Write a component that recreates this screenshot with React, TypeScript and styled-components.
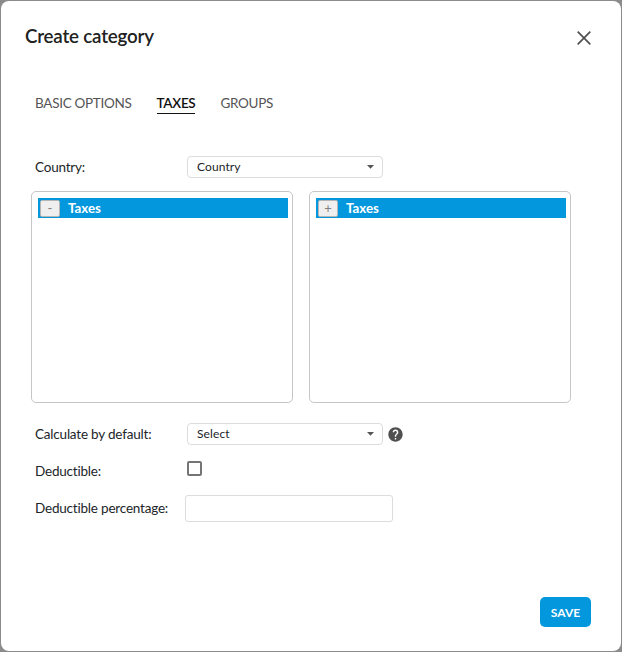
import React from "react";
import styled, { createGlobalStyle } from "styled-components";

const GlobalStyle = createGlobalStyle`
  * { box-sizing: border-box; }
  body {
    margin: 0;
    background: #8b8b8b;
    font-family: Lato, "Liberation Sans", sans-serif;
    color: #212529;
    overflow: hidden;
  }
  button, input { font-family: inherit; }
`;

const Backdrop = styled.div`
  width: 622px;
  height: 652px;
  padding: 1px;
  background: #8b8b8b;
`;

const Dialog = styled.section`
  display: flex;
  flex-direction: column;
  height: 650px;
  background: #fff;
  border-radius: 8px;
`;

const Header = styled.header`
  display: flex;
  justify-content: space-between;
  height: 90px;
  padding: 23px 28px 0 24px;
`;

const Title = styled.h1`
  margin: 0;
  font-size: 18.75px;
  line-height: 24px;
  font-weight: 600;
  letter-spacing: -0.2px;
  color: #212121;
`;

const CloseButton = styled.button`
  display: block;
  width: 18px;
  height: 18px;
  margin-top: 5px;
  padding: 0;
  border: 0;
  background: none;
  svg { display: block; }
`;

const Tabs = styled.nav`
  display: flex;
  align-items: flex-start;
  gap: 25px;
  height: 64px;
  padding: 3px 34px 0;
`;

const Tab = styled.span<{ $active?: boolean }>`
  height: 20px;
  font-size: 13.5px;
  line-height: 18px;
  letter-spacing: -0.3px;
  white-space: nowrap;
  font-weight: ${(p) => (p.$active ? 600 : 400)};
  color: ${(p) => (p.$active ? "#111" : "#555")};
  border-bottom: 1px solid ${(p) => (p.$active ? "#111" : "transparent")};
`;

const Row = styled.div<{ $height: number }>`
  display: grid;
  grid-template-columns: 152px auto;
  justify-content: start;
  align-items: start;
  height: ${(p) => p.$height}px;
  padding-left: 34px;
`;

const Label = styled.label`
  font-size: 13.5px;
  line-height: 24px;
  letter-spacing: -0.2px;
  white-space: nowrap;
`;

const Control = styled.div<{ $outdent?: boolean }>`
  display: flex;
  align-items: center;
  gap: 5px;
  margin-left: ${(p) => (p.$outdent ? -2 : 0)}px;
`;

const SelectControl = styled(Control)`
  margin-top: 1px;
`;

const Select = styled.div`
  display: flex;
  align-items: center;
  justify-content: space-between;
  width: 196px;
  height: 22px;
  padding: 0 8px 0 9px;
  border: 1px solid #dcdcdc;
  border-radius: 4px;
  font-size: 12px;
  line-height: 20px;
  letter-spacing: 0.1px;
`;

const Checkbox = styled.input`
  appearance: none;
  display: block;
  width: 15px;
  height: 15px;
  margin: 2px 0 0;
  border: 2px solid #757575;
  border-radius: 2px;
  background: #fff;
`;

const TextInput = styled.input`
  display: block;
  width: 208px;
  height: 27px;
  padding: 0 8px;
  border: 1px solid #dcdcdc;
  border-radius: 3px;
  background: #fff;
`;

const PercentageLabel = styled(Label)`
  line-height: 27px;
`;

const Panels = styled.div`
  display: flex;
  gap: 16px;
  height: 231px;
  padding-left: 30px;
`;

const Panel = styled.div`
  width: 262px;
  height: 212px;
  padding: 6px 4px 0 6px;
  border: 1px solid #c6c6c6;
  border-radius: 5px;
`;

const PanelHeader = styled.div`
  display: flex;
  align-items: center;
  gap: 8px;
  height: 20px;
  padding: 0 2px;
  background: #0397dd;
  color: #fff;
  font-size: 13.3px;
  line-height: 20px;
  font-weight: 700;
`;

const ToggleButton = styled.button`
  width: 20px;
  height: 17px;
  margin-top: 1px;
  padding: 0;
  border: 1px solid #b5b5b5;
  border-radius: 2px;
  background: #efefef;
  color: #808080;
  font-size: 13px;
  line-height: 15px;
`;

const Footer = styled.footer`
  display: flex;
  justify-content: flex-end;
  margin-top: auto;
  padding: 0 30px 24px 0;
`;

const SaveButton = styled.button`
  width: 51px;
  height: 30px;
  padding: 0;
  border: 0;
  border-radius: 5px;
  background: #0397dd;
  color: #fff;
  font-size: 12px;
  font-weight: 700;
`;

const Caret = () => (
  <svg width="7" height="4" viewBox="0 0 7 4">
    <path d="M0 0h7L3.5 3.8z" fill="#555" />
  </svg>
);

const HelpIcon = () => (
  <svg width="15" height="15" viewBox="1.5 1.5 21 21">
    <path
      fill="#4f4f4f"
      d="M12 2C6.48 2 2 6.48 2 12s4.48 10 10 10 10-4.48 10-10S17.52 2 12 2zm1 17h-2v-2h2v2zm2.07-7.75l-.9.92C13.45 12.9 13 13.5 13 15h-2v-.5c0-1.1.45-2.1 1.17-2.83l1.24-1.26c.37-.36.59-.86.59-1.41 0-1.1-.9-2-2-2s-2 .9-2 2H8c0-2.21 1.79-4 4-4s4 1.79 4 4c0 .88-.36 1.68-.93 2.25z"
    />
  </svg>
);

export default function App() {
  return (
    <Backdrop>
      <GlobalStyle />
      <Dialog>
        <Header>
          <Title>Create category</Title>
          <CloseButton aria-label="Close">
            <svg width="18" height="18" viewBox="0 0 18 18">
              <path d="M2.7 2.7l12.6 12.6M15.3 2.7L2.7 15.3" stroke="#505050" strokeWidth="1.7" />
            </svg>
          </CloseButton>
        </Header>
        <Tabs>
          <Tab>BASIC OPTIONS</Tab>
          <Tab $active>TAXES</Tab>
          <Tab>GROUPS</Tab>
        </Tabs>
        <Row $height={36}>
          <Label>Country:</Label>
          <SelectControl>
            <Select>Country<Caret /></Select>
          </SelectControl>
        </Row>
        <Panels>
          {["-", "+"].map((sign) => (
            <Panel key={sign}>
              <PanelHeader>
                <ToggleButton>{sign}</ToggleButton>
                Taxes
              </PanelHeader>
            </Panel>
          ))}
        </Panels>
        <Row $height={37}>
          <Label>Calculate by default:</Label>
          <SelectControl>
            <Select>Select<Caret /></Select>
            <HelpIcon />
          </SelectControl>
        </Row>
        <Row $height={36}>
          <Label>Deductible:</Label>
          <Checkbox type="checkbox" />
        </Row>
        <Row $height={40}>
          <PercentageLabel>Deductible percentage:</PercentageLabel>
          <Control $outdent>
            <TextInput />
          </Control>
        </Row>
        <Footer>
          <SaveButton>SAVE</SaveButton>
        </Footer>
      </Dialog>
    </Backdrop>
  );
}
